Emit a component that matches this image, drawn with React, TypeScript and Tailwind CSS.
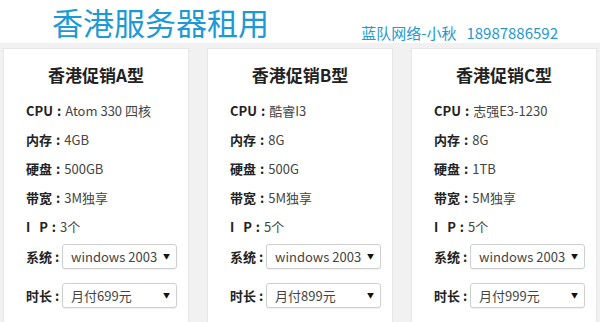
import React from 'react';

type Plan = {
    name: string;
    cpu: string;
    ram: string;
    disk: string;
    bw: string;
    ip: string;
    price: string;
};

const plans: Plan[] = [
    { name: '香港促销A型', cpu: 'Atom 330 四核', ram: '4GB', disk: '500GB', bw: '3M独享', ip: '3个', price: '月付699元' },
    { name: '香港促销B型', cpu: '酷睿I3', ram: '8G', disk: '500G', bw: '5M独享', ip: '5个', price: '月付899元' },
    { name: '香港促销C型', cpu: '志强E3-1230', ram: '8G', disk: '1TB', bw: '5M独享', ip: '5个', price: '月付999元' },
];

const font = { fontFamily: '"Noto Sans CJK SC", "Noto Sans", sans-serif' };

function Row({ label, value }: { label: string; value: string }) {
    return (
        <div className="h-[29px] flex items-center text-[13px] whitespace-pre">
            <span className="font-bold text-[#222]">{label}</span>
            <span className="font-bold text-[#222] mx-[4px]">:</span>
            <span className="text-[#444]">{value}</span>
        </div>
    );
}

function FakeSelect({ label, value }: { label: string; value: string }) {
    return (
        <div className="flex items-center h-[25px]">
            <span className="w-[36px] shrink-0 text-[13px] font-bold text-[#222] whitespace-nowrap">
                {label}<span className="ml-[3px]">:</span>
            </span>
            <div className="flex-1 h-[25px] mr-[11px] flex items-center justify-between border border-[#cfcfcf] rounded-[3px] bg-white pl-[8px] pr-[6px] shadow-[0_1px_1px_rgba(0,0,0,0.06)]">
                <span className="text-[13px] text-[#444] whitespace-nowrap">{value}</span>
                <span className="text-[7px] text-[#111]">▼</span>
            </div>
        </div>
    );
}

function Card({ plan }: { plan: Plan }) {
    return (
        <div className="bg-white border border-[#e6e6e6] h-[290px] pl-[22px]">
            <div className="pt-[14px] pr-[22px] text-center text-[17px] leading-[24px] font-bold text-[#222]">{plan.name}</div>
            <div className="mt-[9px]">
                <Row label="CPU" value={plan.cpu} />
                <Row label="内存" value={plan.ram} />
                <Row label="硬盘" value={plan.disk} />
                <Row label="带宽" value={plan.bw} />
                <Row label="I   P" value={plan.ip} />
            </div>
            <div className="mt-[3px] flex flex-col gap-[14px]">
                <FakeSelect label="系统" value="windows 2003" />
                <FakeSelect label="时长" value={plan.price} />
            </div>
        </div>
    );
}

export default function App() {
    return (
        <div className="w-[600px] h-[322px] overflow-hidden bg-[#f1f1f1]" style={font}>
            <div className="h-[43px] bg-white flex items-end">
                <div className="pl-[52px] text-[31px] leading-[42px] text-[#1c9ad6] whitespace-nowrap">香港服务器租用</div>
                <div className="ml-auto pr-[42px] text-[15px] leading-[20px] text-[#2598cf] whitespace-nowrap">
                    蓝队网络-小秋<span className="ml-[10px]">18987886592</span>
                </div>
            </div>
            <div className="pt-[5px] px-[3px] grid grid-cols-3 gap-[18px]">
                {plans.map(p => (
                    <Card key={p.name} plan={p} />
                ))}
            </div>
        </div>
    );
}
